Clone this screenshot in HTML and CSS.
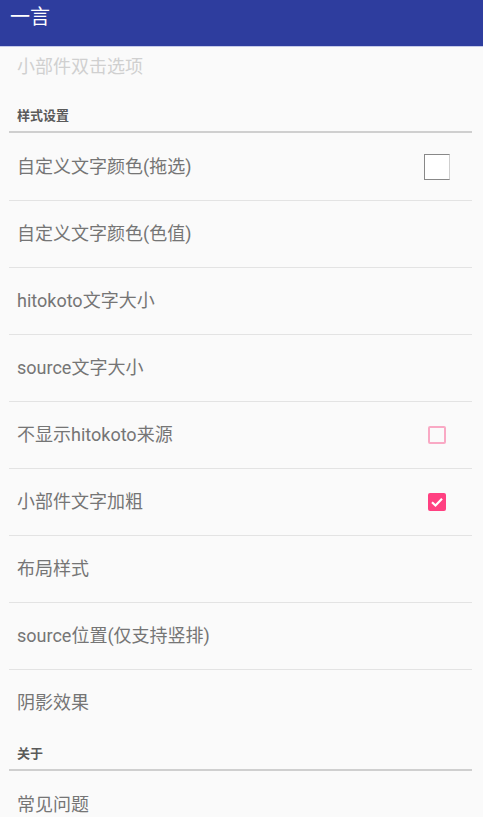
FILE: index.html
```html
<!DOCTYPE html>
<html lang="zh-CN">
<head>
  <meta charset="UTF-8" />
  <meta name="viewport" content="width=device-width, initial-scale=1.0"/>
  <title>一言</title>
  <link rel="stylesheet" href="styles.css">
</head>
<body>

  <header class="toolbar">
    <h1>一言</h1>
  </header>

  <div class="prefs">
    <div class="pref disabled">
      <span class="pref-title">小部件双击选项</span>
    </div>

    <div class="category">样式设置</div>

    <div class="pref">
      <span class="pref-title">自定义文字颜色(拖选)</span>
      <span class="swatch"></span>
    </div>
    <div class="pref">
      <span class="pref-title">自定义文字颜色(色值)</span>
    </div>
    <div class="pref">
      <span class="pref-title">hitokoto文字大小</span>
    </div>
    <div class="pref">
      <span class="pref-title">source文字大小</span>
    </div>
    <div class="pref">
      <span class="pref-title">不显示hitokoto来源</span>
      <span class="check off"></span>
    </div>
    <div class="pref">
      <span class="pref-title">小部件文字加粗</span>
      <span class="check on">
        <svg viewBox="0 0 18 18" width="18" height="18">
          <path d="M4 9.2 L7.5 12.5 L14 5.8" fill="none" stroke="#fff" stroke-width="2.2"/>
        </svg>
      </span>
    </div>
    <div class="pref">
      <span class="pref-title">布局样式</span>
    </div>
    <div class="pref">
      <span class="pref-title">source位置(仅支持竖排)</span>
    </div>
    <div class="pref last">
      <span class="pref-title">阴影效果</span>
    </div>

    <div class="category">关于</div>

    <div class="pref">
      <span class="pref-title">常见问题</span>
    </div>
  </div>

</body>
</html>
```

FILE: styles.css
```css
body {
  font-family: Roboto, 'Noto Sans CJK SC', sans-serif;
  margin: 0;
  padding: 0;
  background: #fafafa;
  color: #757575;
  overflow: hidden;
}

.toolbar {
  background: #2e3d9e;
  height: 46px;
  border-bottom: 1px solid #c5cae9;
}

.toolbar h1 {
  margin: 0;
  padding: 4px 0 0 10px;
  font-size: 20px;
  font-weight: normal;
  line-height: 26px;
  color: white;
}

.prefs {
  padding: 0 11px 0 9px;
}

.pref {
  display: flex;
  align-items: center;
  justify-content: space-between;
  height: 66px;
  padding: 0 22px 0 8px;
  border-bottom: 1px solid #e3e3e3;
  font-size: 18px;
}

.pref-title {
  padding-bottom: 4px;
}

.pref.disabled {
  height: 40px;
  align-items: flex-start;
  border-bottom: none;
  color: #d0d0d0;
}

.pref.disabled .pref-title {
  padding-bottom: 0;
  line-height: 40px;
}

.pref.last {
  border-bottom: none;
}

.category {
  padding: 20px 8px 6px;
  margin-bottom: 1px;
  font-size: 13px;
  font-weight: bold;
  line-height: 18px;
  color: #5a5a5a;
  border-bottom: 2px solid #cfcfcf;
}

.pref.last + .category {
  padding-top: 9px;
}

.swatch {
  width: 24px;
  height: 24px;
  background: white;
  border: 1px solid #888;
  border-right-color: #cfcfcf;
}

.check {
  width: 18px;
  height: 18px;
  box-sizing: border-box;
  border-radius: 2px;
  margin-right: 4px;
}

.check.off {
  border: 2px solid #f9a9c4;
}

.check.on {
  background: #ff4081;
}

.check svg {
  display: block;
}
```
